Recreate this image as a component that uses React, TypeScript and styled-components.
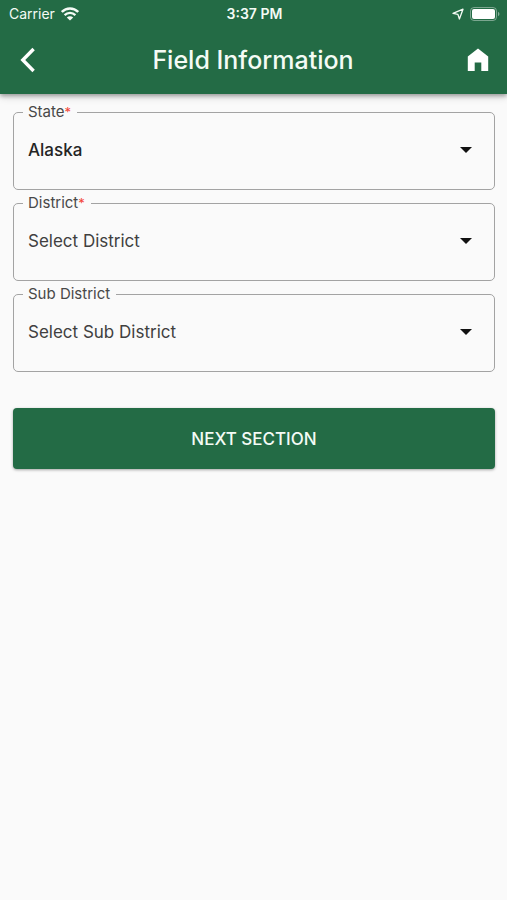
import { useId, useState } from "react";
import styled, { createGlobalStyle } from "styled-components";

const green = "#236b45";

const GlobalStyle = createGlobalStyle`
  *, *::before, *::after { box-sizing: border-box; }
  body {
    margin: 0;
    background: #fafafa;
    color: #242424;
    font-family: Inter, "Liberation Sans", sans-serif;
  }
`;

const Header = styled.header`
  background: ${green};
  color: #f4fbf5;
  box-shadow: 0 2px 4px rgba(0, 0, 0, 0.3), 0 3px 8px rgba(0, 0, 0, 0.14);
`;

const StatusBar = styled.div`
  display: grid;
  grid-template-columns: 1fr auto 1fr;
  align-items: center;
  height: 27px;
  padding: 0 7px 0 9px;
  font-size: 14px;
  line-height: 20px;
`;

const StatusGroup = styled.div<{ $end?: boolean }>`
  display: flex;
  align-items: center;
  justify-content: ${(p) => (p.$end ? "flex-end" : "flex-start")};
  gap: 6px;
`;

const Clock = styled.time`
  font-size: 14px;
  font-weight: 600;
`;

const AppBar = styled.div`
  display: grid;
  grid-template-columns: 56px 1fr 56px;
  align-items: center;
  height: 67px;
  padding-right: 1px;
  padding-bottom: 1px;
`;

const Title = styled.h1`
  margin: 0;
  text-align: center;
  font-size: 25px;
  line-height: 32px;
  font-weight: 500;
`;

const IconButton = styled.button`
  display: flex;
  align-items: center;
  justify-content: center;
  height: 56px;
  padding: 0;
  border: 0;
  background: none;
  color: #fff;
  cursor: pointer;
`;

const Form = styled.form`
  display: flex;
  flex-direction: column;
  gap: 3px;
  padding: 8px 12px 24px 13px;
`;

const FieldFrame = styled.fieldset`
  min-width: 0;
  margin: 0;
  padding: 0;
  border: 1px solid #a3a3a3;
  border-radius: 5px;
`;

const Legend = styled.legend`
  margin-left: 9px;
  padding: 0 6px 0 5px;
  font-size: 15px;
  line-height: 20px;
  color: #484848;

  label {
    display: block;
  }
`;

const Required = styled.span`
  font-size: 13px;
  color: #f44336;
`;

const SelectWrap = styled.div`
  display: grid;
  align-items: center;
  height: 67px;
  padding-bottom: 11px;

  > * {
    grid-area: 1 / 1;
  }

  svg {
    justify-self: end;
    margin-right: 22px;
    pointer-events: none;
  }
`;

const Select = styled.select<{ $filled: boolean }>`
  width: 100%;
  height: 56px;
  padding: 0 48px 0 14px;
  border: 0;
  border-radius: 5px;
  appearance: none;
  background: transparent;
  color: ${(p) => (p.$filled ? "#242424" : "#404040")};
  font-family: inherit;
  font-size: 17px;
  font-weight: ${(p) => (p.$filled ? 500 : 400)};
`;

const NextButton = styled.button`
  height: 61px;
  margin-top: 33px;
  border: 0;
  border-radius: 4px;
  background: ${green};
  color: #f4fbf5;
  box-shadow: 0 1px 3px rgba(0, 0, 0, 0.35);
  font-family: inherit;
  font-size: 17px;
  font-weight: 500;
  cursor: pointer;
`;

function WifiIcon() {
  return (
    <svg width="18" height="14" viewBox="0 0 18 14" fill="none" stroke="currentColor" aria-label="Wi-Fi">
      <path d="M0.8 5C5.4 0.3 12.6 0.3 17.2 5" strokeWidth="2.5" />
      <path d="M3.6 8.1C6.7 5 11.3 5 14.4 8.1" strokeWidth="2.3" />
      <path d="M5.8 10.4C7.6 8.7 10.4 8.7 12.2 10.4L9 13.6Z" fill="currentColor" stroke="none" />
    </svg>
  );
}

function LocationIcon() {
  return (
    <svg width="12" height="12" viewBox="0 0 12 12" fill="none" stroke="currentColor" strokeWidth="1.3" strokeLinejoin="round" aria-label="Location">
      <path d="M1 5.4L11 1.2L7.4 11L5.9 6.4Z" />
    </svg>
  );
}

function BatteryIcon() {
  return (
    <svg width="30" height="14" viewBox="0 0 30 14" aria-label="Battery full">
      <rect x="0.5" y="0.5" width="26" height="13" rx="3.5" fill="none" stroke="#fff" strokeOpacity="0.4" />
      <rect x="2" y="2" width="23" height="10" rx="2" fill="#fff" />
      <path d="M28 4.8C30 5.6 30 8.4 28 9.2Z" fill="#fff" fillOpacity="0.45" />
    </svg>
  );
}

function BackIcon() {
  return (
    <svg width="16" height="26" viewBox="0 0 16 26" fill="none" stroke="currentColor" strokeWidth="3.4" aria-hidden="true">
      <path d="M13.6 2L2.8 13L13.6 24" />
    </svg>
  );
}

function HomeIcon() {
  return (
    <svg width="22" height="24" viewBox="0 0 22 24" fill="currentColor" aria-hidden="true">
      <path d="M11 0.6L21.2 8.4V23H14.3V14.6H7.7V23H0.8V8.4Z" />
    </svg>
  );
}

function DropIcon() {
  return (
    <svg width="12" height="6" viewBox="0 0 12 6" fill="#111" aria-hidden="true">
      <path d="M0 0H12L6 6Z" />
    </svg>
  );
}

type FieldProps = {
  label: string;
  required?: boolean;
  initial?: string;
  placeholder: string;
  options: string[];
};

function SelectField({ label, required, initial = "", placeholder, options }: FieldProps) {
  const id = useId();
  const [value, setValue] = useState(initial);
  return (
    <FieldFrame>
      <Legend>
        <label htmlFor={id}>
          {label}
          {required && <Required>*</Required>}
        </label>
      </Legend>
      <SelectWrap>
        <Select
          id={id}
          required={required}
          $filled={value !== ""}
          value={value}
          onChange={(e) => setValue(e.target.value)}
        >
          <option value="">{placeholder}</option>
          {options.map((o) => (
            <option key={o}>{o}</option>
          ))}
        </Select>
        <DropIcon />
      </SelectWrap>
    </FieldFrame>
  );
}

export default function App() {
  return (
    <>
      <GlobalStyle />
      <Header>
        <StatusBar>
          <StatusGroup>
            <span>Carrier</span>
            <WifiIcon />
          </StatusGroup>
          <Clock>3:37 PM</Clock>
          <StatusGroup $end>
            <LocationIcon />
            <BatteryIcon />
          </StatusGroup>
        </StatusBar>
        <AppBar>
          <IconButton type="button" aria-label="Back">
            <BackIcon />
          </IconButton>
          <Title>Field Information</Title>
          <IconButton type="button" aria-label="Home">
            <HomeIcon />
          </IconButton>
        </AppBar>
      </Header>
      <main>
        <Form onSubmit={(e) => e.preventDefault()}>
          <SelectField label="State" required initial="Alaska" placeholder="Select State" options={["Alaska"]} />
          <SelectField label="District" required placeholder="Select District" options={[]} />
          <SelectField label="Sub District" placeholder="Select Sub District" options={[]} />
          <NextButton type="submit">NEXT SECTION</NextButton>
        </Form>
      </main>
    </>
  );
}
